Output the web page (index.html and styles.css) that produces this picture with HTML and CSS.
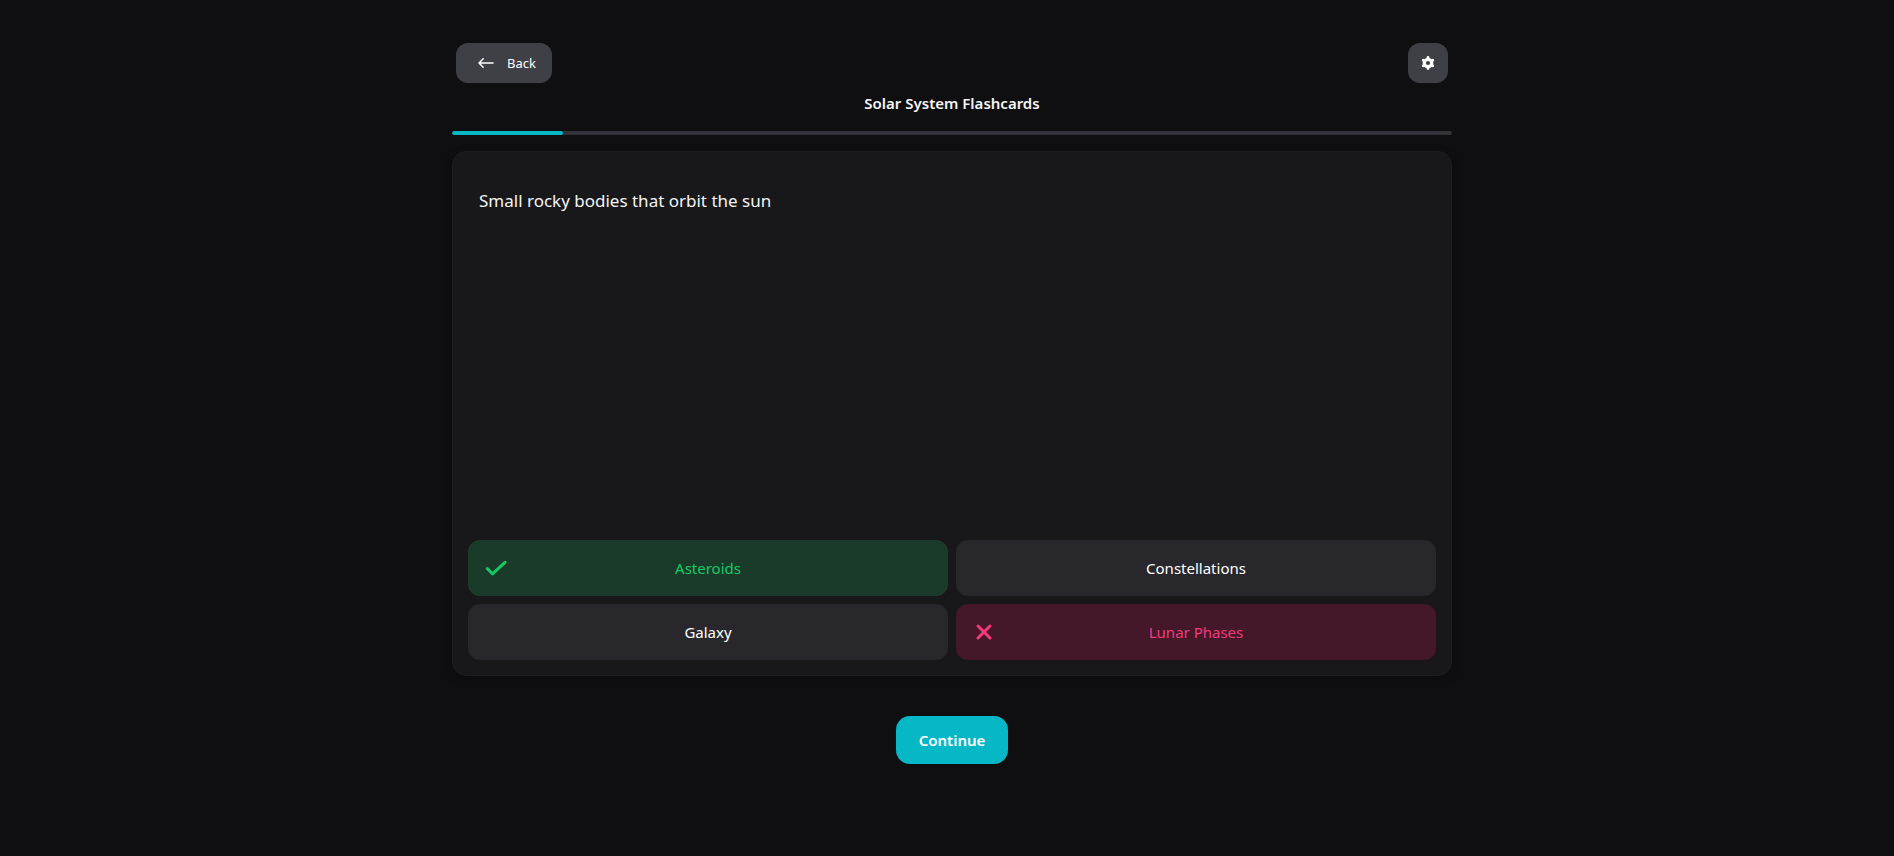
FILE: index.html
```html
<!DOCTYPE html>
<html lang="en">
<head>
<meta charset="utf-8">
<meta name="viewport" content="width=device-width, initial-scale=1">
<title>Solar System Flashcards</title>
<link rel="stylesheet" href="styles.css">
</head>
<body>
<main class="study">
  <header class="toolbar">
    <button class="btn btn-back" type="button">
      <svg class="icon-arrow" viewBox="0 0 18 18" fill="none" stroke="currentColor" stroke-width="1.500" stroke-linecap="round" stroke-linejoin="round" aria-hidden="true"><path d="M16 9H2M6.200 4.800L2 9l4.200 4.200"/></svg>
      <span>Back</span>
    </button>
    <button class="btn btn-settings" type="button" aria-label="Settings">
      <svg class="icon-gear" viewBox="0 0 24 24" fill="none" stroke="currentColor" aria-hidden="true"><circle cx="12" cy="12" r="6.400" stroke-width="5.600"/><path stroke-width="4.800" stroke-linecap="round" d="M12 4.500V2.600M12 19.500v1.900M5.500 8.250L3.860 7.300M18.500 15.750l1.640.95M18.500 8.250l1.640-.95M5.500 15.750l-1.640.95"/></svg>
    </button>
  </header>
  <h1 class="title">Solar System Flashcards</h1>
  <div class="progress" role="progressbar" aria-label="Progress" aria-valuemin="0" aria-valuemax="9" aria-valuenow="1">
    <div class="progress-fill" style="width: 11.1%"></div>
  </div>
  <section class="card">
    <p class="question">Small rocky bodies that orbit the sun</p>
    <div class="options">
      <button class="option option-correct" type="button">
        <svg class="mark" viewBox="0 0 24 24" fill="none" stroke="currentColor" stroke-width="3" stroke-linecap="round" stroke-linejoin="round" aria-hidden="true"><path d="M3.200 12.500l5.300 5.300L21 6.300"/></svg>
        Asteroids
      </button>
      <button class="option" type="button">Constellations</button>
      <button class="option" type="button">Galaxy</button>
      <button class="option option-wrong" type="button">
        <svg class="mark" viewBox="0 0 24 24" fill="none" stroke="currentColor" stroke-width="3" stroke-linecap="round" aria-hidden="true"><path d="M6 6l12 12M18 6L6 18"/></svg>
        Lunar Phases
      </button>
    </div>
  </section>
  <button class="btn-continue" type="button">Continue</button>
</main>
</body>
</html>
```
FILE: styles.css
```css
* {
  box-sizing: border-box;
}

body {
  margin: 0;
  min-height: 100vh;
  padding: 39px 0 0 10px;
  background: #0f0f11;
  color: #f4f4f5;
  font-family: "Segoe UI", "Noto Sans", "Open Sans", sans-serif;
  font-size: 15px;
  line-height: 24px;
}

button {
  border: 0;
  font: inherit;
  cursor: pointer;
}

.study {
  display: flex;
  flex-direction: column;
  width: 100%;
  max-width: 1000px;
  margin: 0 auto;
}

.toolbar {
  display: flex;
  justify-content: space-between;
  padding: 4px;
}

.btn {
  display: flex;
  align-items: center;
  justify-content: center;
  height: 40px;
  border-radius: 12px;
  background: #3f3f46;
  color: #fff;
}

.btn-back {
  gap: 12px;
  padding: 0 16px 0 21px;
  font-size: 13px;
}

.icon-arrow {
  width: 18px;
  height: 18px;
}

.btn-settings {
  width: 40px;
  padding: 0;
}

.icon-gear {
  width: 14px;
  height: 14px;
  overflow: visible;
}

.title {
  margin: 4px 0 16px;
  font-size: 15px;
  font-weight: 600;
  line-height: 24px;
  text-align: center;
}

.progress {
  height: 4px;
  border-radius: 2px;
  background: #323238;
  overflow: hidden;
}

.progress-fill {
  height: 100%;
  border-radius: 2px;
  background: #06b7c6;
}

.card {
  display: flex;
  flex-direction: column;
  min-height: 525px;
  margin-top: 16px;
  padding: 15px;
  border: 1px solid #1d1d1f;
  border-radius: 14px;
  background: #18181a;
  box-shadow: 0 2px 10px #00000040;
}

.question {
  flex: 1;
  margin: 0;
  padding: 20px 11px;
  font-size: 17px;
  line-height: 28px;
}

.options {
  display: grid;
  grid-template-columns: 1fr 1fr;
  gap: 8px;
}

.option {
  position: relative;
  height: 56px;
  border-radius: 12px;
  background: #28282c;
  color: #fff;
}

.option-correct {
  background: #1a3b2a;
  color: #17c964;
}

.option-wrong {
  background: #441729;
  color: #f5397b;
}

.mark {
  position: absolute;
  top: 16px;
  left: 16px;
  width: 24px;
  height: 24px;
}

.btn-continue {
  align-self: center;
  height: 48px;
  margin-top: 40px;
  padding: 0 23px;
  border-radius: 14px;
  background: #06b7c6;
  color: #fff;
  font-weight: 600;
}
```
